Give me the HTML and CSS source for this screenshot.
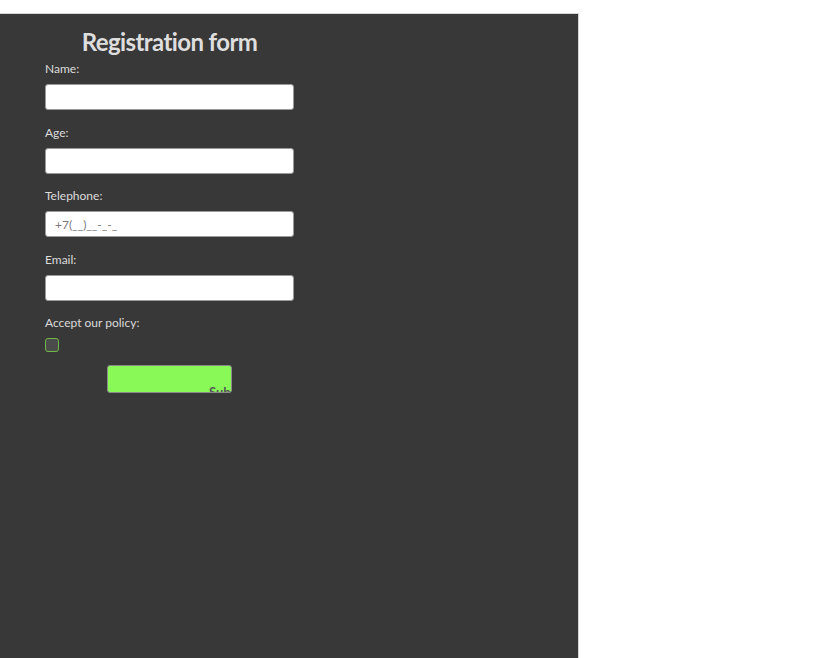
FILE: index.html
```html
<!DOCTYPE html>
<html>
<head>
<meta charset="utf-8">
<link rel="stylesheet" href="styles.css">
</head>
<body>
<div class="page">
  <div class="panel">
    <form class="form">
      <h1 class="title">Registration form</h1>
      <div class="field">
        <label class="label">Name:</label>
        <input class="input" type="text">
      </div>
      <div class="field">
        <label class="label">Age:</label>
        <input class="input" type="text">
      </div>
      <div class="field">
        <label class="label">Telephone:</label>
        <input class="input" type="text" placeholder="+7(__)__-_-_">
      </div>
      <div class="field">
        <label class="label">Email:</label>
        <input class="input" type="text">
      </div>
      <div class="field">
        <label class="label">Accept our policy:</label>
        <span class="checkbox"></span>
      </div>
      <div class="actions">
        <button class="submit" type="button"><span>Submit</span></button>
      </div>
    </form>
  </div>
</div>
</body>
</html>
```
FILE: styles.css
```css
html, body {
  margin: 0;
  padding: 0;
  background: #ffffff;
  overflow: hidden;
}
.page {
  padding-top: 13px;
}
.panel {
  width: 579px;
  height: 645px;
  background: #383838;
  border-top: 1px solid #d4d4d4;
  border-right: 1px solid #d4d4d4;
  box-sizing: border-box;
}
.form {
  width: 339px;
  padding: 0 45px;
  box-sizing: border-box;
  display: flex;
  flex-direction: column;
  font-family: "Lato", sans-serif;
  color: #dcdcdc;
}
.title {
  margin: 14px 0 0 0;
  text-align: center;
  font-size: 24px;
  font-weight: 700;
  line-height: 28px;
  letter-spacing: -0.6px;
  color: #dedede;
}
.field {
  display: flex;
  flex-direction: column;
  margin-bottom: 9.5px;
}
.label {
  font-size: 12px;
  line-height: 16px;
  margin-top: 5px;
  margin-bottom: 7px;
}
.input {
  height: 26px;
  border: 1px solid #9a9a9a;
  border-radius: 3px;
  background: #ffffff;
  box-sizing: border-box;
  padding: 0 9px;
  font-family: "Lato", sans-serif;
  font-size: 12px;
  outline: none;
}
.input::placeholder {
  color: #7a7a7a;
}
.checkbox {
  width: 14px;
  height: 14px;
  box-sizing: border-box;
  border: 1.5px solid #6fb84a;
  border-radius: 3px;
  background: #4b4b4b;
  margin-top: 0;
}
.actions {
  display: flex;
  justify-content: center;
  margin-top: 3px;
}
.submit {
  width: 125px;
  height: 28px;
  background: #88f957;
  border: 1px solid #8a8a8a;
  border-radius: 3px;
  padding: 0;
  overflow: hidden;
  position: relative;
}
.submit span {
  position: absolute;
  left: 101px;
  top: 18px;
  font-family: "Lato", sans-serif;
  font-size: 13px;
  font-weight: 700;
  color: #555555;
}
```
